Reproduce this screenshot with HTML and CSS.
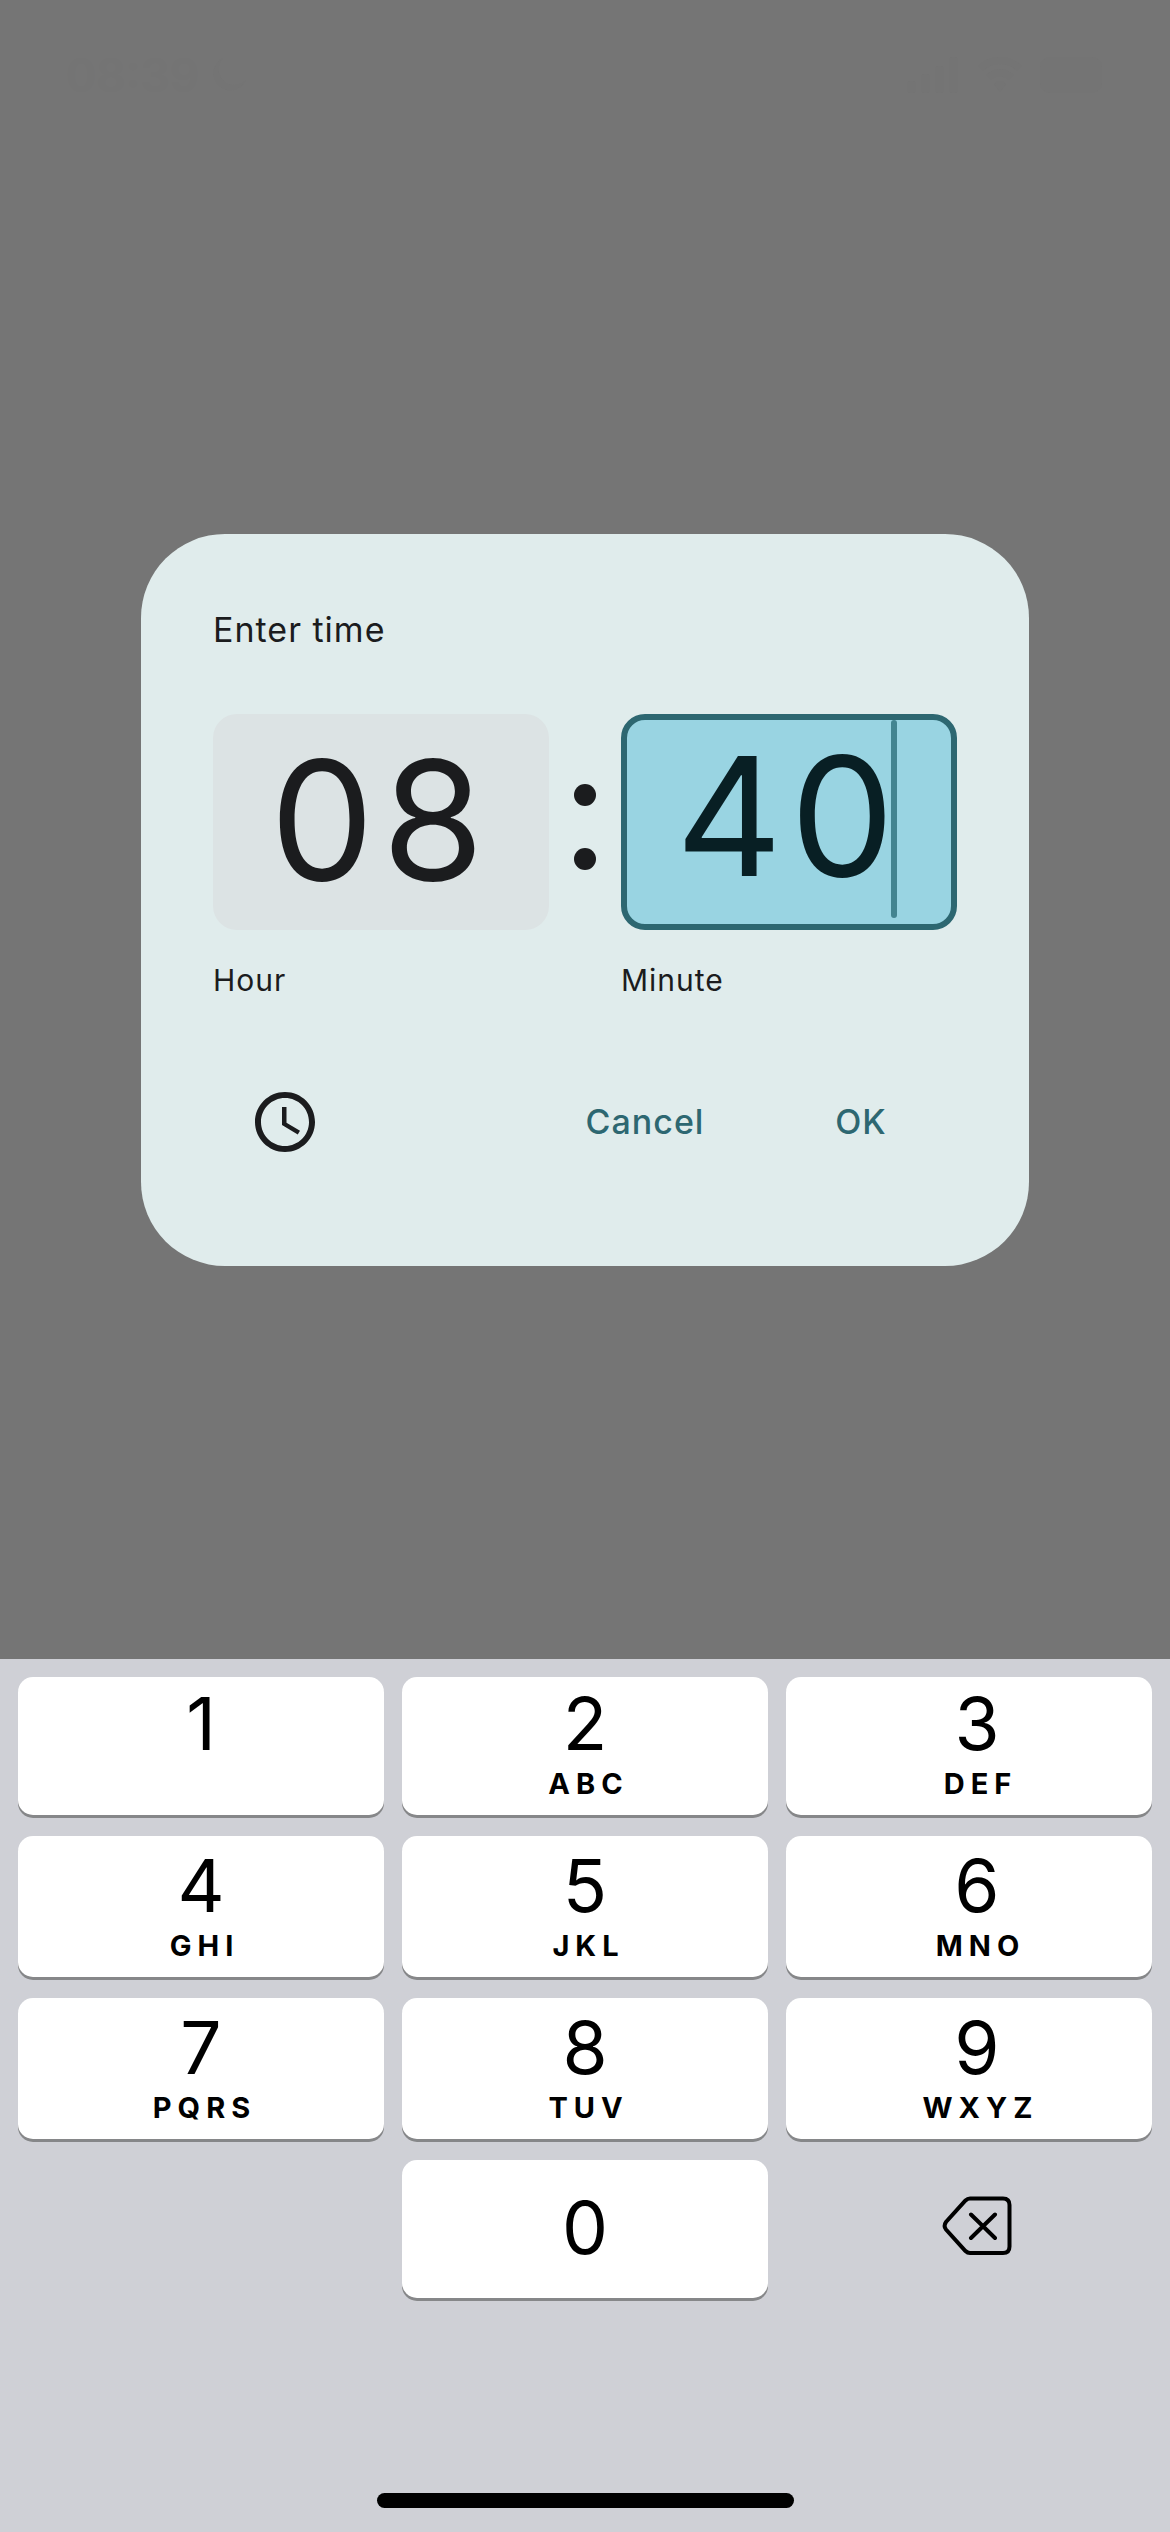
FILE: index.html
```html
<!DOCTYPE html>
<html lang="en">
<head>
<meta charset="utf-8">
<meta name="viewport" content="width=device-width, initial-scale=1">
<title>Enter time</title>
<link rel="stylesheet" href="styles.css">
</head>
<body>
<header class="status-bar">
  <span class="status-time">08:39</span>
  <svg class="moon-icon" viewBox="0 0 36 36" aria-hidden="true"><path d="M12 1a17 17 0 1 0 23 22A15 15 0 0 1 12 1z"/></svg>
  <svg class="status-icons" viewBox="0 0 200 36" aria-hidden="true">
    <rect x="0" y="24" width="9" height="12" rx="3"/>
    <rect x="14" y="17" width="9" height="19" rx="3"/>
    <rect x="28" y="9" width="9" height="27" rx="3"/>
    <rect x="42" y="0" width="9" height="36" rx="3"/>
    <path d="M93 0c-9 0-16 3-22 9l5 5a24 24 0 0 1 34 0l5-5c-6-6-13-9-22-9zm0 12c-5 0-10 2-14 6l5 5a13 13 0 0 1 18 0l5-5c-4-4-9-6-14-6zm0 12c-2 0-4 1-6 3l6 8 6-8c-2-2-4-3-6-3z"/>
    <rect x="133" y="0" width="62" height="36" rx="10"/>
  </svg>
</header>
<main class="backdrop">
  <form class="dialog" role="dialog" aria-labelledby="dialog-title">
    <h1 class="dialog-title" id="dialog-title">Enter time</h1>
    <div class="fields">
      <input class="time-input" id="hour" type="text" inputmode="numeric" value="08">
      <div class="separator" aria-hidden="true"><span class="dot"></span><span class="dot"></span></div>
      <div class="active-field">
        <input class="time-input time-input-active" id="minute" type="text" inputmode="numeric" value="40">
        <span class="caret"></span>
      </div>
      <label class="field-label" for="hour">Hour</label>
      <label class="field-label field-label-minute" for="minute">Minute</label>
    </div>
    <div class="actions">
      <button class="icon-button" type="button" aria-label="Switch to dial">
        <svg class="clock-icon" viewBox="0 0 24 24" aria-hidden="true"><path d="M11.990 2C6.470 2 2 6.480 2 12s4.470 10 9.990 10C17.520 22 22 17.520 22 12S17.520 2 11.990 2zM12 20c-4.420 0-8-3.580-8-8s3.580-8 8-8 8 3.580 8 8-3.580 8-8 8zm.5-13H11v6l5.250 3.150.75-1.230-4.500-2.670z"/></svg>
      </button>
      <button class="text-button" type="button">Cancel</button>
      <button class="text-button" type="button">OK</button>
    </div>
  </form>
</main>
<section class="keyboard" aria-label="Number pad">
  <div class="keys">
    <button class="key" type="button"><span class="digit">1</span><span class="letters"></span></button>
    <button class="key" type="button"><span class="digit">2</span><span class="letters">ABC</span></button>
    <button class="key key-right" type="button"><span class="digit">3</span><span class="letters">DEF</span></button>
    <button class="key" type="button"><span class="digit">4</span><span class="letters">GHI</span></button>
    <button class="key" type="button"><span class="digit">5</span><span class="letters">JKL</span></button>
    <button class="key key-right" type="button"><span class="digit">6</span><span class="letters">MNO</span></button>
    <button class="key" type="button"><span class="digit">7</span><span class="letters">PQRS</span></button>
    <button class="key" type="button"><span class="digit">8</span><span class="letters">TUV</span></button>
    <button class="key key-right" type="button"><span class="digit">9</span><span class="letters">WXYZ</span></button>
    <button class="key key-zero" type="button"><span class="digit">0</span></button>
    <button class="key-delete key-right" type="button" aria-label="Delete">
      <svg class="delete-icon" viewBox="0 0 70 60" aria-hidden="true"><path d="M28 2.500H61Q67.500 2.500 67.500 9V50.500Q67.500 57 61 57H28Q25.500 57 23.500 55L4 33.500Q1.200 30 4 26L23.500 4.500Q25.500 2.500 28 2.500ZM29 18.500L53 42M53 18.500L29 42"/></svg>
    </button>
  </div>
  <div class="home-indicator"></div>
</section>
</body>
</html>
```
FILE: styles.css
```css
* {
  box-sizing: border-box;
}

body {
  margin: 0;
  min-height: 100vh;
  display: flex;
  flex-direction: column;
  background: #757575;
  color: #1b1c1e;
  font-family: Inter, "Liberation Sans", sans-serif;
}

button,
input {
  margin: 0;
  padding: 0;
  border: 0;
  background: none;
  color: inherit;
  font: inherit;
}

.status-bar {
  display: flex;
  align-items: center;
  gap: 12px;
  height: 141px;
  padding: 9px 63px 0 66px;
  color: #747474;
  fill: currentColor;
}

.status-time {
  font-size: 46px;
  font-weight: 600;
  line-height: 56px;
}

.moon-icon {
  width: 36px;
  height: 36px;
}

.status-icons {
  width: 200px;
  height: 36px;
  margin-left: auto;
}

.backdrop {
  flex: 1;
  display: flex;
  align-items: center;
  justify-content: center;
  padding: 0 72px;
}

.dialog {
  width: 100%;
  max-width: 888px;
  padding: 72px;
  border-radius: 84px;
  background: #e0ecec;
}

.dialog-title {
  margin: 0 0 60px;
  font-size: 34px;
  font-weight: 400;
  line-height: 48px;
  letter-spacing: 1px;
}

.fields {
  display: grid;
  grid-template-columns: 1fr 72px 1fr;
  row-gap: 28px;
}

.time-input {
  width: 100%;
  height: 216px;
  padding-bottom: 4px;
  border-radius: 24px;
  background: #dce3e4;
  font-size: 165px;
  letter-spacing: 8px;
  text-align: center;
}

.active-field {
  position: relative;
}

.time-input-active {
  border: 6px solid #2d6771;
  padding-bottom: 12px;
  background: #99d4e2;
  color: #081f24;
}

.caret {
  position: absolute;
  top: 6px;
  right: 60px;
  width: 6px;
  height: 198px;
  border-radius: 3px;
  background: #438490;
}

.separator {
  display: flex;
  flex-direction: column;
  align-items: center;
  justify-content: center;
  gap: 42px;
  padding-top: 10px;
}

.dot {
  width: 22px;
  height: 22px;
  border-radius: 50%;
  background: #1b1c1e;
}

.field-label {
  font-size: 30px;
  line-height: 44px;
  letter-spacing: 1px;
}

.field-label-minute {
  grid-column: 3;
}

.actions {
  display: flex;
  align-items: center;
  margin-top: 48px;
}

.icon-button {
  display: grid;
  place-items: center;
  width: 144px;
  height: 144px;
  margin-right: auto;
}

.clock-icon {
  width: 72px;
  height: 72px;
  fill: currentColor;
}

.text-button {
  min-width: 192px;
  height: 120px;
  padding: 0 36px 2px;
  margin-left: 24px;
  color: #2d6771;
  font-size: 34px;
  font-weight: 500;
  letter-spacing: 1px;
}

.keyboard {
  padding: 18px 18px 24px;
  background: #cfd0d6;
}

.keys {
  display: grid;
  grid-template-columns: repeat(3, 1fr);
  grid-template-rows: 138px 141px 141px 138px;
  gap: 21px 18px;
}

.key {
  display: flex;
  flex-direction: column;
  align-items: center;
  justify-content: flex-end;
  padding-bottom: 13px;
  border-radius: 15px;
  background: #fff;
  box-shadow: 0 3px 0 #868789;
  color: #000;
}

.key-right {
  padding-left: 16px;
}

.digit {
  margin-bottom: 2px;
  font-size: 73px;
  line-height: 80px;
}

.letters {
  height: 36px;
  padding-left: 7px;
  font-size: 29px;
  font-weight: 700;
  line-height: 36px;
  letter-spacing: 6px;
}

.key-zero {
  grid-column: 2;
  justify-content: center;
  padding: 0;
}

.key-delete {
  display: grid;
  place-items: center;
  padding-bottom: 6px;
  color: #000;
}

.delete-icon {
  width: 70px;
  height: 60px;
  fill: none;
  stroke: currentColor;
  stroke-width: 4;
  stroke-linecap: round;
}

.home-indicator {
  width: 417px;
  height: 15px;
  margin: 195px auto 0;
  border-radius: 8px;
  background: #000;
}
```
